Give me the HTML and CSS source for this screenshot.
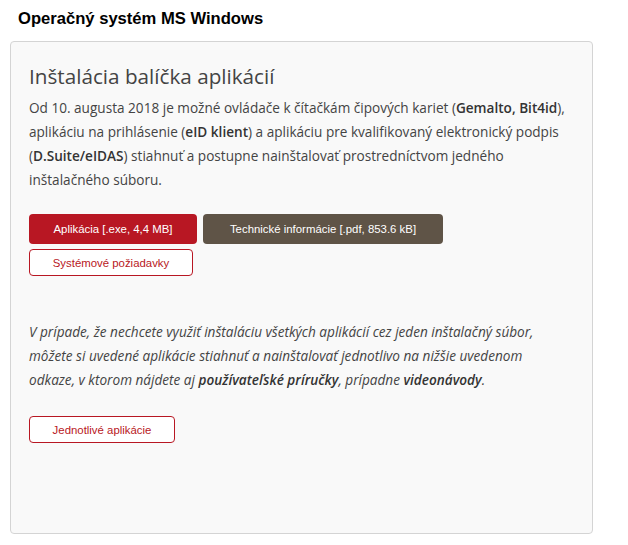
FILE: index.html
```html
<!DOCTYPE html>
<html lang="sk">
<head>
<meta charset="UTF-8" />
<title>Operačný systém MS Windows</title>
<link rel="stylesheet" href="styles.css">
</head>
<body>

<h3 class="os-title">Operačný systém MS Windows</h3>

<div class="card">
  <h2 class="card-title">Inštalácia balíčka aplikácií</h2>
  <p class="intro">Od 10. augusta 2018 je možné ovládače k čítačkám čipových kariet (<b>Gemalto, Bit4id</b>), aplikáciu na prihlásenie (<b>eID klient</b>) a aplikáciu pre kvalifikovaný elektronický podpis (<b>D.Suite/eIDAS</b>) stiahnuť a postupne nainštalovať prostredníctvom jedného inštalačného súboru.</p>

  <div class="btn-row">
    <a class="btn btn-red btn-app" href="#">Aplikácia [.exe, 4,4 MB]</a>
    <a class="btn btn-brown btn-tech" href="#">Technické informácie [.pdf, 853.6 kB]</a>
  </div>
  <div class="btn-row">
    <a class="btn btn-outline btn-req" href="#">Systémové požiadavky</a>
  </div>

  <p class="note">V prípade, že nechcete využiť inštaláciu všetkých aplikácií cez jeden inštalačný súbor, môžete si uvedené aplikácie stiahnuť a nainštalovať jednotlivo na nižšie uvedenom odkaze, v ktorom nájdete aj <b>používateľské príručky</b>, prípadne <b>videonávody</b>.</p>

  <a class="btn btn-outline btn-single" href="#">Jednotlivé aplikácie</a>
</div>

</body>
</html>
```

FILE: styles.css
```css
body { margin: 0; padding: 10px 35px 0 10px; background: #fff; font-family: "Open Sans", sans-serif; color: #444; }
.os-title { font-family: "Liberation Sans", Arial, sans-serif; font-size: 16.6px; font-weight: bold; color: #000; margin: 0 0 13px 8px; line-height: 18px; }
.card {
  background: #f9f9f9; border: 1px solid #d4d4d4; border-radius: 4px;
  padding: 20px 18px 0 18px; height: 493px; box-sizing: border-box;
}
.card-title { font-size: 20.7px; font-weight: 400; color: #444; margin: 0 0 6px 0; line-height: 28px; }
.intro { font-size: 13.6px; line-height: 24px; margin: 0 0 22px 0; color: #444; }
.intro b, .note b { font-weight: 600; color: #333; }
.btn-row { display: flex; gap: 6px; margin-bottom: 5px; }
.btn {
  display: flex; align-items: center; justify-content: center; box-sizing: border-box;
  font-family: "Liberation Sans", Arial, sans-serif; font-size: 11.4px; text-decoration: none;
  border-radius: 4px;
}
.btn-red { background: #b81723; color: #fff; height: 30px; }
.btn-brown { background: #5f5447; color: #fff; height: 30px; }
.btn-outline { background: #fff; color: #b81723; border: 1px solid #b81723; height: 27px; }
.btn-app { width: 168px; }
.btn-tech { width: 240px; }
.btn-req { width: 164px; }
.note { font-style: italic; font-size: 13.6px; line-height: 24px; margin: 44px 0 24px 0; max-width: 528px; color: #444; }
.btn-single { width: 146px; }
```
